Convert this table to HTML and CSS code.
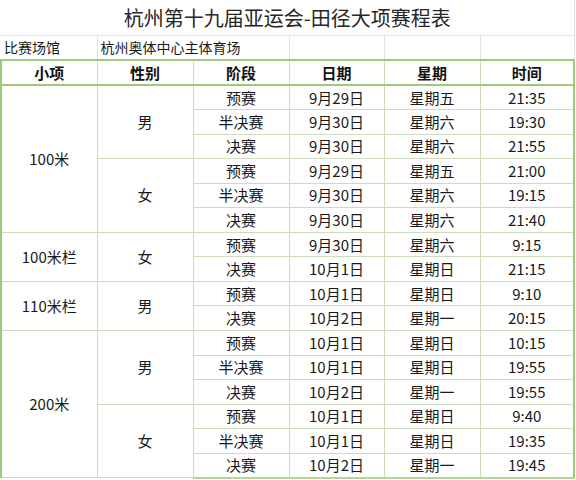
FILE: index.html
```html
<!DOCTYPE html>
<html lang="zh">
<head>
<meta charset="utf-8">
<link rel="stylesheet" href="styles.css">
</head>
<body>
<table class="sched">
  <colgroup>
    <col class="c1"><col class="c2"><col class="c3"><col class="c4"><col class="c5"><col class="c6">
  </colgroup>
  <tr class="title-row"><td colspan="6" class="title">杭州第十九届亚运会-田径大项赛程表</td></tr>
  <tr class="venue-row">
    <td class="left">比赛场馆</td>
    <td colspan="2" class="left">杭州奥体中心主体育场</td>
    <td></td><td></td><td></td>
  </tr>
  <tr class="head-row">
    <th class="first">小项</th><th>性别</th><th>阶段</th><th>日期</th><th>星期</th><th class="last">时间</th>
  </tr>
  <tr><td class="first" rowspan="6">100米</td><td rowspan="3">男</td><td>预赛</td><td>9月29日</td><td>星期五</td><td class="last">21:35</td></tr>
  <tr><td>半决赛</td><td>9月30日</td><td>星期六</td><td class="last">19:30</td></tr>
  <tr><td>决赛</td><td>9月30日</td><td>星期六</td><td class="last">21:55</td></tr>
  <tr><td rowspan="3">女</td><td>预赛</td><td>9月29日</td><td>星期五</td><td class="last">21:00</td></tr>
  <tr><td>半决赛</td><td>9月30日</td><td>星期六</td><td class="last">19:15</td></tr>
  <tr><td>决赛</td><td>9月30日</td><td>星期六</td><td class="last">21:40</td></tr>
  <tr><td class="first" rowspan="2">100米栏</td><td rowspan="2">女</td><td>预赛</td><td>9月30日</td><td>星期六</td><td class="last">9:15</td></tr>
  <tr><td>决赛</td><td>10月1日</td><td>星期日</td><td class="last">21:15</td></tr>
  <tr><td class="first" rowspan="2">110米栏</td><td rowspan="2">男</td><td>预赛</td><td>10月1日</td><td>星期日</td><td class="last">9:10</td></tr>
  <tr><td>决赛</td><td>10月2日</td><td>星期一</td><td class="last">20:15</td></tr>
  <tr><td class="first" rowspan="6">200米</td><td rowspan="3">男</td><td>预赛</td><td>10月1日</td><td>星期日</td><td class="last">10:15</td></tr>
  <tr><td>半决赛</td><td>10月1日</td><td>星期日</td><td class="last">19:55</td></tr>
  <tr><td>决赛</td><td>10月2日</td><td>星期一</td><td class="last">19:55</td></tr>
  <tr><td rowspan="3">女</td><td>预赛</td><td>10月1日</td><td>星期日</td><td class="last">9:40</td></tr>
  <tr><td>半决赛</td><td>10月1日</td><td>星期日</td><td class="last">19:35</td></tr>
  <tr><td>决赛</td><td>10月2日</td><td>星期一</td><td class="last">19:45</td></tr>
</table>
</body>
</html>
```
FILE: styles.css
```css
html, body {
  margin: 0;
  padding: 0;
  background: #fff;
}
body {
  font-family: "Noto Sans CJK SC", "Noto Sans", sans-serif;
  color: #1a1a1a;
}
.sched {
  border-collapse: collapse;
  table-layout: fixed;
  width: 574px;
}
.c1, .c2, .c3 { width: 96px; }
.c4 { width: 95px; }
.c5 { width: 96px; }
.c6 { width: 94px; }

.sched td, .sched th {
  padding: 0;
  text-align: center;
  vertical-align: middle;
  font-size: 15px;
  line-height: 18px;
  border: 1px solid #cddcbd;
  font-weight: normal;
  white-space: nowrap;
  overflow: hidden;
}
.sched tr { height: 24.56px; }

.title-row { height: 35px !important; }
.sched td.title {
  font-size: 20px;
  color: #262626;
  border: none;
  border-right: 1px solid #e2e2e2;
  border-bottom: 1px solid #e2e2e2;
  padding-top: 1px;
}

.venue-row { height: 25px !important; }
.venue-row td {
  font-size: 14px;
  border-top: 1px solid #e2e2e2;
  border-left: 1px solid #e2e2e2;
  border-right: 1px solid #e2e2e2;
  border-bottom: 2px solid #9fc87c;
}
.venue-row td:first-child { border-left: none; }
.sched td.left {
  text-align: left;
  padding-left: 3px;
}

.head-row { height: 25px !important; }
.sched .head-row th {
  font-weight: bold;
  font-size: 15px;
  color: #111;
  border-left: 1px solid #cddcbd;
  border-right: 1px solid #cddcbd;
  border-top: 2px solid #9fc87c;
  border-bottom: 2px solid #9fc87c;
}
.sched .first, .sched .head-row th.first { border-left: 2px solid #9fc87c; }
.sched .last, .sched .head-row th.last { border-right: 2px solid #9fc87c; }
.sched tr:last-child td { border-bottom: 2px solid #b5d39a; }
```
